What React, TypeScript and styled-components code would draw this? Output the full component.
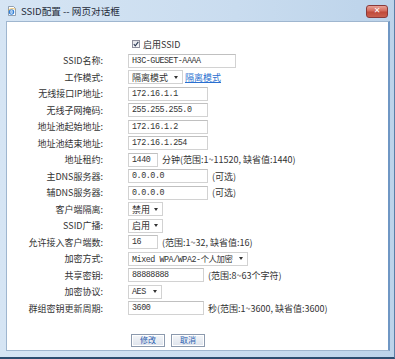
import React from 'react'
import styled, { createGlobalStyle } from 'styled-components'

const GlobalStyle = createGlobalStyle`
  html, body {
    margin: 0;
    padding: 0;
    background: #ffffff;
  }
  body {
    font-family: 'Noto Sans CJK SC', 'Noto Sans', sans-serif;
  }
`

const cjk = `'Noto Sans CJK SC', 'Noto Sans', sans-serif`
const mono = `'Liberation Mono', 'Noto Sans CJK SC', monospace`

const Window = styled.div`
  width: 395px;
  height: 359px;
  box-sizing: border-box;
  display: flex;
  flex-direction: column;
  background: linear-gradient(90deg, #d6e5f4 0%, #c9dcef 60%, #bcd3ea 100%);
  border-right: 1px solid #5a7ea6;
  border-bottom: 2px solid #2d4d70;
`

const TitleBar = styled.div`
  height: 21px;
  display: flex;
  align-items: center;
  padding: 0 6px 0 7px;
  gap: 4px;
`

const TitleText = styled.div`
  font-family: ${cjk};
  font-size: 9.6px;
  color: #1e2a38;
  flex: 1;
`

const CloseButton = styled.div`
  width: 20px;
  height: 11px;
  border-radius: 3px;
  border: 1px solid #8a3a3a;
  background: linear-gradient(180deg, #e8a196 0%, #d36b5c 45%, #c04a3a 55%, #c9604e 100%);
  display: flex;
  align-items: center;
  justify-content: center;
  color: #ffffff;
  font-family: 'DejaVu Sans', sans-serif;
  font-size: 8px;
  font-weight: bold;
  line-height: 1;
  margin-top: 1px;
`

const Body = styled.div`
  flex: 1;
  margin: 0 4px 6px 6px;
  background: #ffffff;
  border: 1px solid #9fb6cf;
  border-right: 2px solid #6f97c4;
  display: flex;
  flex-direction: column;
`

const Form = styled.div`
  display: grid;
  grid-template-columns: 96px 1fr;
  grid-auto-rows: 16.5px;
  column-gap: 25px;
  align-items: center;
  padding-top: 14px;
`

const Label = styled.div`
  font-family: ${cjk};
  font-size: 9px;
  color: #333333;
  text-align: right;
  white-space: nowrap;
`

const Field = styled.div`
  display: flex;
  align-items: center;
  gap: 4px;
  white-space: nowrap;
`

const TextInput = styled.input<{ $w: number }>`
  width: ${p => p.$w}px;
  height: 14px;
  box-sizing: border-box;
  margin: 0;
  padding: 0 3px;
  border: 1px solid #d2d2d2;
  border-top-color: #c0c0c0;
  background: #ffffff;
  font-family: ${mono};
  font-size: 8.4px;
  letter-spacing: -0.45px;
  color: #333333;
  outline: none;
`

const SelectBox = styled.div<{ $w: number }>`
  width: ${p => p.$w}px;
  height: 14px;
  box-sizing: border-box;
  border: 1px solid #d2d2d2;
  background: #ffffff;
  display: flex;
  align-items: center;
  justify-content: space-between;
  padding: 0 4px 0 3px;
  font-family: ${cjk};
  font-size: 9px;
  color: #333333;
`

const SelectValue = styled.span<{ $mono?: boolean }>`
  font-family: ${p => (p.$mono ? mono : cjk)};
  font-size: ${p => (p.$mono ? '8.4px' : '9px')};
  letter-spacing: ${p => (p.$mono ? '-0.45px' : '0')};
`

const Arrow = styled.span`
  width: 0;
  height: 0;
  border-left: 2.5px solid transparent;
  border-right: 2.5px solid transparent;
  border-top: 3px solid #333333;
`

const Hint = styled.span`
  font-family: ${cjk};
  font-size: 9px;
  color: #333333;
`

const ModeLink = styled.a`
  font-family: ${cjk};
  font-size: 9px;
  color: #2a6fd0;
  text-decoration: underline;
  margin-left: -2px;
`

const CheckRow = styled.label`
  display: flex;
  align-items: center;
  gap: 3px;
  font-family: ${cjk};
  font-size: 9px;
  color: #333333;
  padding-left: 4px;
`

const CheckBox = styled.span`
  width: 8px;
  height: 8px;
  box-sizing: border-box;
  border: 1px solid #8f8f9d;
  background: linear-gradient(180deg, #e4e4e8, #f8f8fa);
  display: flex;
  align-items: center;
  justify-content: center;
`

const ButtonRow = styled.div`
  display: flex;
  gap: 6px;
  padding: 17px 0 0 124px;
`

const Button = styled.button`
  width: 34px;
  height: 13px;
  box-sizing: border-box;
  margin: 0;
  padding: 0;
  border: 1px solid #8c9aae;
  background: linear-gradient(180deg, #f4f6f9 0%, #dde3ec 100%);
  box-shadow: inset 0 0 0 1px #ffffff;
  font-family: ${cjk};
  font-size: 8px;
  line-height: 1;
  color: #2c5fb0;
`

const PageIcon = () => (
  <svg width="10" height="10" viewBox="0 0 10 10">
    <path d="M1.5 0.5h5l2 2v7h-7z" fill="#ffffff" stroke="#7a8aa0" strokeWidth="0.8" />
    <circle cx="4.5" cy="6" r="2.2" fill="none" stroke="#2f7fd8" strokeWidth="1.1" />
    <path d="M2.5 6h4" stroke="#2f7fd8" strokeWidth="0.9" />
    <path d="M1 4.2c2-1.6 5-2 7.5-1" stroke="#e0a020" strokeWidth="0.7" fill="none" />
  </svg>
)

const Tick = () => (
  <svg width="6" height="6" viewBox="0 0 6 6">
    <path d="M0.8 3.2l1.5 1.6 3-4" stroke="#2b3a55" strokeWidth="1.1" fill="none" />
  </svg>
)

type Row =
  | { label: string; kind: 'input'; value: string; w: number; hint?: string }
  | { label: string; kind: 'select'; value: string; w: number; mono?: boolean; link?: string }

const rows: Row[] = [
  { label: 'SSID名称:', kind: 'input', value: 'H3C-GUESET-AAAA', w: 108 },
  { label: '工作模式:', kind: 'select', value: '隔离模式', w: 55, link: '隔离模式' },
  { label: '无线接口IP地址:', kind: 'input', value: '172.16.1.1', w: 80 },
  { label: '无线子网掩码:', kind: 'input', value: '255.255.255.0', w: 80 },
  { label: '地址池起始地址:', kind: 'input', value: '172.16.1.2', w: 80 },
  { label: '地址池结束地址:', kind: 'input', value: '172.16.1.254', w: 80 },
  { label: '地址租约:', kind: 'input', value: '1440', w: 30, hint: '分钟(范围:1~11520, 缺省值:1440)' },
  { label: '主DNS服务器:', kind: 'input', value: '0.0.0.0', w: 80, hint: '(可选)' },
  { label: '辅DNS服务器:', kind: 'input', value: '0.0.0.0', w: 80, hint: '(可选)' },
  { label: '客户端隔离:', kind: 'select', value: '禁用', w: 35 },
  { label: 'SSID广播:', kind: 'select', value: '启用', w: 35 },
  { label: '允许接入客户端数:', kind: 'input', value: '16', w: 30, hint: '(范围:1~32, 缺省值:16)' },
  { label: '加密方式:', kind: 'select', value: 'Mixed WPA/WPA2-个人加密', w: 120, mono: true },
  { label: '共享密钥:', kind: 'input', value: '88888888', w: 76, hint: '(范围:8~63个字符)' },
  { label: '加密协议:', kind: 'select', value: 'AES', w: 34, mono: true },
  { label: '群组密钥更新周期:', kind: 'input', value: '3600', w: 76, hint: '秒(范围:1~3600, 缺省值:3600)' },
]

export default function App() {
  return (
    <>
      <GlobalStyle />
      <Window>
        <TitleBar>
          <PageIcon />
          <TitleText>SSID配置 -- 网页对话框</TitleText>
          <CloseButton>✕</CloseButton>
        </TitleBar>
        <Body>
          <Form>
            <span />
            <CheckRow>
              <CheckBox><Tick /></CheckBox>
              启用SSID
            </CheckRow>
            {rows.map(r => (
              <React.Fragment key={r.label}>
                <Label>{r.label}</Label>
                <Field>
                  {r.kind === 'input' ? (
                    <>
                      <TextInput $w={r.w} defaultValue={r.value} readOnly />
                      {r.hint && <Hint>{r.hint}</Hint>}
                    </>
                  ) : (
                    <>
                      <SelectBox $w={r.w}>
                        <SelectValue $mono={r.mono}>{r.value}</SelectValue>
                        <Arrow />
                      </SelectBox>
                      {r.link && <ModeLink>{r.link}</ModeLink>}
                    </>
                  )}
                </Field>
              </React.Fragment>
            ))}
          </Form>
          <ButtonRow>
            <Button>修改</Button>
            <Button>取消</Button>
          </ButtonRow>
        </Body>
      </Window>
    </>
  )
}
